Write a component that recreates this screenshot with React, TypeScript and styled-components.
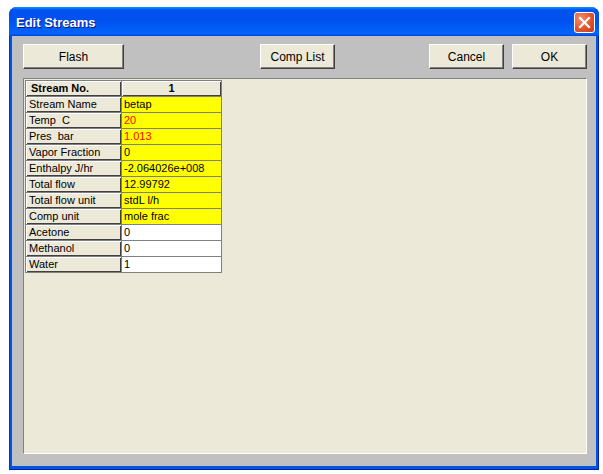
import React from 'react';
import styled, { createGlobalStyle } from 'styled-components';

const GlobalStyle = createGlobalStyle`
  html, body {
    margin: 0;
    padding: 0;
    background: #ffffff;
  }
  body {
    font-family: 'Liberation Sans', Arial, sans-serif;
  }
`;

type Row = {
  label: string;
  value: string;
  tone: 'yellow' | 'white';
  red?: boolean;
};

const rows: Row[] = [
  { label: 'Stream Name', value: 'betap', tone: 'yellow' },
  { label: 'Temp  C', value: '20', tone: 'yellow', red: true },
  { label: 'Pres  bar', value: '1.013', tone: 'yellow', red: true },
  { label: 'Vapor Fraction', value: '0', tone: 'yellow' },
  { label: 'Enthalpy J/hr', value: '-2.064026e+008', tone: 'yellow' },
  { label: 'Total flow', value: '12.99792', tone: 'yellow' },
  { label: 'Total flow unit', value: 'stdL l/h', tone: 'yellow' },
  { label: 'Comp unit', value: 'mole frac', tone: 'yellow' },
  { label: 'Acetone', value: '0', tone: 'white' },
  { label: 'Methanol', value: '0', tone: 'white' },
  { label: 'Water', value: '1', tone: 'white' },
];

const Page = styled.div`
  padding: 7px 0 0 9px;
`;

const Window = styled.div`
  width: 590px;
  height: 463px;
  display: flex;
  flex-direction: column;
  border-radius: 8px 8px 0 0;
  overflow: hidden;
  background: #0054e3;
  box-shadow: inset -1px -1px #001ea0, inset 1px 0 #0831d9;
`;

const TitleBar = styled.div`
  height: 29px;
  flex: none;
  display: flex;
  align-items: center;
  padding: 0 4px 0 7px;
  background: linear-gradient(
    to bottom,
    #0997ff 0%,
    #0053ee 10%,
    #0050ee 45%,
    #0062f8 85%,
    #0066ff 92%,
    #003dd7 100%
  );
  > span {
    flex: 1;
    color: #ffffff;
    font-family: 'Liberation Sans', Arial, sans-serif;
    font-weight: bold;
    font-size: 13px;
    text-shadow: 1px 1px #0a1883;
    padding-top: 1px;
  }
`;

const CloseButton = styled.div`
  width: 19px;
  height: 19px;
  border: 1px solid #ffffff;
  border-radius: 3px;
  background: radial-gradient(circle at 30% 30%, #f08e6e 0%, #e2552c 55%, #c13b1a 100%);
  display: flex;
  align-items: center;
  justify-content: center;
  margin-top: 1px;
`;

const Frame = styled.div`
  flex: 1;
  display: flex;
  padding: 0 3px 4px 3px;
`;

const Client = styled.div`
  flex: 1;
  display: flex;
  flex-direction: column;
  background: #c0c0c0;
  padding: 8px 9px 12px 11px;
`;

const Toolbar = styled.div`
  display: flex;
  height: 25px;
  flex: none;
`;

const Button = styled.div<{ w: number; ml?: string }>`
  width: ${(p) => p.w}px;
  margin-left: ${(p) => p.ml || '0'};
  box-sizing: border-box;
  background: #ece9d8;
  border-top: 1px solid #ffffff;
  border-left: 1px solid #ffffff;
  border-right: 1px solid #404040;
  border-bottom: 1px solid #404040;
  box-shadow: inset -1px -1px #808080;
  display: flex;
  align-items: center;
  justify-content: center;
  font-size: 12px;
  color: #000000;
`;

const Panel = styled.div`
  flex: 1;
  margin-top: 9px;
  background: #ece9d8;
  border-top: 1px solid #808080;
  border-left: 1px solid #808080;
  border-right: 1px solid #ffffff;
  border-bottom: 1px solid #ffffff;
  padding: 1px;
`;

const Grid = styled.div`
  display: grid;
  width: max-content;
  grid-template-columns: 95px 99px;
  grid-auto-rows: 15px;
  gap: 1px;
  padding: 1px;
  background: #808080;
`;

const HeadCell = styled.div<{ center?: boolean }>`
  background: #ece9d8;
  box-shadow: inset 1px 1px #ffffff, inset -1px -1px #404040;
  font-size: 11px;
  font-weight: bold;
  line-height: 15px;
  padding-left: ${(p) => (p.center ? '0' : '5px')};
  text-align: ${(p) => (p.center ? 'center' : 'left')};
  white-space: nowrap;
  overflow: hidden;
`;

const LabelCell = styled.div`
  background: #ece9d8;
  box-shadow: inset 1px 1px #ffffff, inset -1px -1px #404040;
  font-size: 11px;
  line-height: 15px;
  padding-left: 3px;
  white-space: pre;
  overflow: hidden;
  color: #000000;
`;

const ValueCell = styled.div<{ tone: 'yellow' | 'white'; red?: boolean }>`
  background: ${(p) => (p.tone === 'yellow' ? '#ffff00' : '#ffffff')};
  color: ${(p) => (p.red ? '#ff0000' : '#000000')};
  font-size: 11px;
  line-height: 15px;
  padding-left: 2px;
  white-space: nowrap;
  overflow: hidden;
`;

const App: React.FC = () => {
  return (
    <Page>
      <GlobalStyle />
      <Window>
        <TitleBar>
          <span>Edit Streams</span>
          <CloseButton>
            <svg width="13" height="13" viewBox="0 0 13 13">
              <path d="M2 2 L11 11 M11 2 L2 11" stroke="#ffffff" strokeWidth="2.2" strokeLinecap="square" />
            </svg>
          </CloseButton>
        </TitleBar>
        <Frame>
          <Client>
            <Toolbar>
              <Button w={101}>Flash</Button>
              <Button w={75} ml="136px">
                Comp List
              </Button>
              <Button w={75} ml="auto">
                Cancel
              </Button>
              <Button w={75} ml="8px">
                OK
              </Button>
            </Toolbar>
            <Panel>
              <Grid>
                <HeadCell>Stream No.</HeadCell>
                <HeadCell center>1</HeadCell>
                {rows.map((r) => (
                  <React.Fragment key={r.label}>
                    <LabelCell>{r.label}</LabelCell>
                    <ValueCell tone={r.tone} red={r.red}>
                      {r.value}
                    </ValueCell>
                  </React.Fragment>
                ))}
              </Grid>
            </Panel>
          </Client>
        </Frame>
      </Window>
    </Page>
  );
};

export default App;
